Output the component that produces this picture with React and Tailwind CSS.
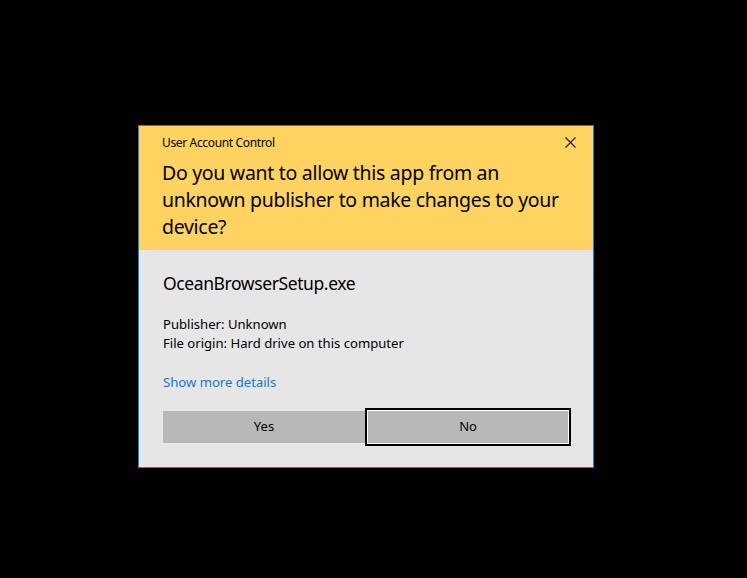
import React from 'react';

const font = { fontFamily: '"Segoe UI", "Noto Sans", sans-serif' };

const UacDialog = () => {
    return (
        <div className="w-[456px] h-[343px] border border-[#1883d7] flex flex-col text-black" style={font}>
            <div className="h-[124px] bg-[#ffd35f] pl-[23px] pr-[16px] pt-[8px]">
                <div className="flex items-center justify-between h-[17px]">
                    <span className="text-[12px] leading-[17px] tracking-[-0.35px]">User Account Control</span>
                    <svg width="11" height="11" viewBox="0 0 11 11" className="mr-[1px]">
                        <path d="M0.5 0.5 L10.5 10.5 M10.5 0.5 L0.5 10.5" stroke="#1a1a1a" strokeWidth="1.1" />
                    </svg>
                </div>
                <h1 className="mt-[8px] text-[19.5px] leading-[27px] font-normal tracking-[-0.3px]">
                    Do you want to allow this app from an unknown publisher to make changes to your device?
                </h1>
            </div>
            <div className="flex-1 bg-[#e6e6e6] pl-[24px] pr-[22px] pt-[21px]">
                <p className="text-[17.5px] leading-[24px] tracking-[-0.4px]">OceanBrowserSetup.exe</p>
                <div className="mt-[20px] text-[13.1px] leading-[19px]">
                    <p>Publisher: Unknown</p>
                    <p>File origin: Hard drive on this computer</p>
                </div>
                <p className="mt-[20px] text-[13.1px] leading-[19px] text-[#0f79d2]">Show more details</p>
                <div className="mt-[16px] flex items-center">
                    <button className="w-[202px] h-[32px] bg-[#b8b8b8] text-[13px]">Yes</button>
                    <button className="w-[206px] h-[38px] border-2 border-black bg-[#b8b8b8] text-[13px] shadow-[inset_0_0_0_1px_#ffffff]">No</button>
                </div>
            </div>
        </div>
    );
};

export default function App() {
    return (
        <div className="w-[747px] h-[578px] bg-black pl-[138px] pt-[125px]">
            <UacDialog />
        </div>
    );
}
